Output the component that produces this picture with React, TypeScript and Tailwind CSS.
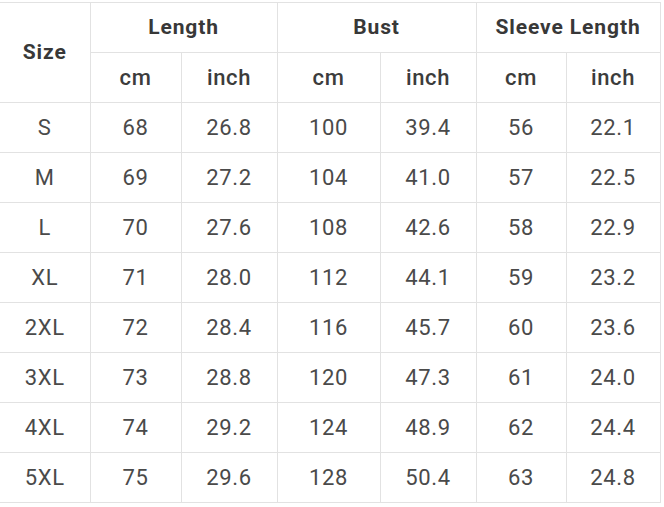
const rows = [
  ['S', '68', '26.8', '100', '39.4', '56', '22.1'],
  ['M', '69', '27.2', '104', '41.0', '57', '22.5'],
  ['L', '70', '27.6', '108', '42.6', '58', '22.9'],
  ['XL', '71', '28.0', '112', '44.1', '59', '23.2'],
  ['2XL', '72', '28.4', '116', '45.7', '60', '23.6'],
  ['3XL', '73', '28.8', '120', '47.3', '61', '24.0'],
  ['4XL', '74', '29.2', '124', '48.9', '62', '24.4'],
  ['5XL', '75', '29.6', '128', '50.4', '63', '24.8'],
];

const widths = ['w-[90px]', 'w-[91px]', 'w-[96px]', 'w-[103px]', 'w-[96px]', 'w-[90px]', 'w-[94px]'];

export default function App() {
  const cell = 'border border-[#e2e2e2] text-center align-middle';
  const head = cell + ' font-bold text-[21px] text-[#383838] h-[50px] tracking-[0.9px]';
  return (
    <div className="w-[664px] h-[507px] bg-white pt-[2px] font-['Roboto',sans-serif]">
      <table className="border-collapse table-fixed w-[660px] border-l-0">
        <colgroup>
          {widths.map((w, i) => <col key={i} className={w} />)}
        </colgroup>
        <thead>
          <tr>
            <th rowSpan={2} className={head + ' border-l-0'}>Size</th>
            <th colSpan={2} className={head}>Length</th>
            <th colSpan={2} className={head}>Bust</th>
            <th colSpan={2} className={head}>Sleeve Length</th>
          </tr>
          <tr>
            {['cm', 'inch', 'cm', 'inch', 'cm', 'inch'].map((t, i) => (
              <th key={i} className={cell + ' font-medium text-[22px] text-[#3c3c3c] h-[50px] tracking-[0.6px]'}>{t}</th>
            ))}
          </tr>
        </thead>
        <tbody>
          {rows.map(r => (
            <tr key={r[0]}>
              {r.map((v, i) => (
                <td
                  key={i}
                  className={cell + ' h-[50px] text-[22px] text-[#4a4a4a] tracking-[0.7px]' + (i === 0 ? ' border-l-0' : '')}
                >
                  {v}
                </td>
              ))}
            </tr>
          ))}
        </tbody>
      </table>
    </div>
  );
}
